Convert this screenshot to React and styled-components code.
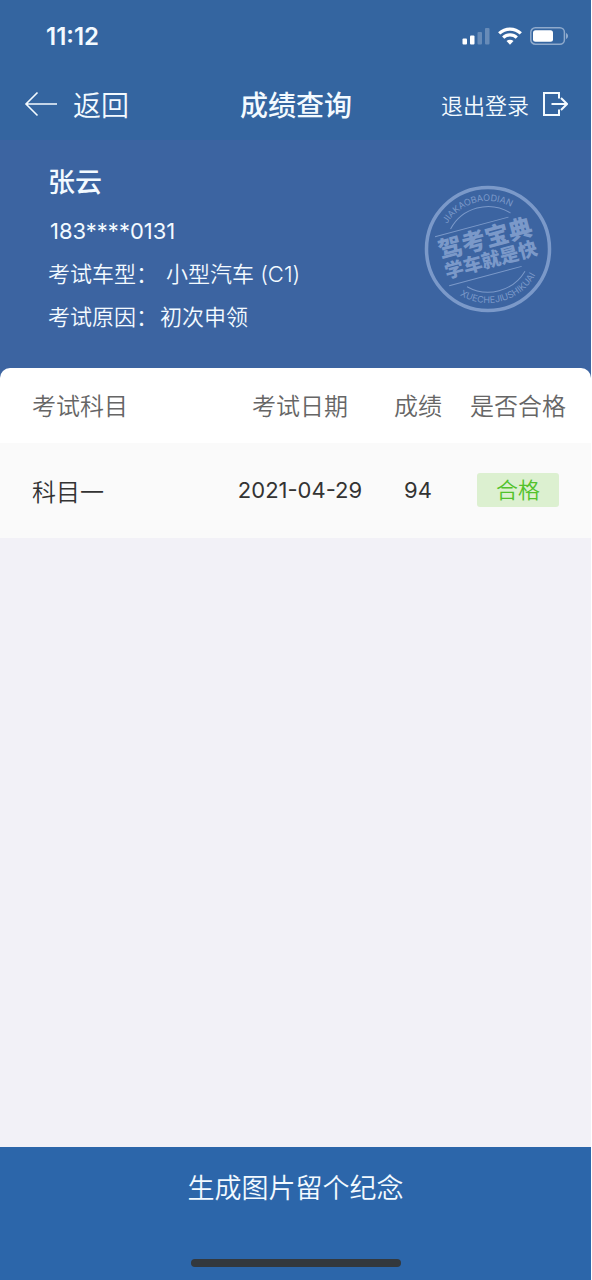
import React from 'react';
import styled, { createGlobalStyle } from 'styled-components';

const GlobalStyle = createGlobalStyle`
  * {
    box-sizing: border-box;
  }

  body {
    margin: 0;
    background: #ffffff;
    font-family: Inter, 'Noto Sans CJK SC', sans-serif;
    -webkit-font-smoothing: antialiased;
  }
`;

const Page = styled.div`
  min-height: 100vh;
  display: flex;
  flex-direction: column;
  background: #f2f1f7;
  border-right: 1px solid #ffffff;
`;

const Header = styled.header`
  background: #3465a0;
  color: #f3faff;
`;

const StatusBar = styled.div`
  display: flex;
  align-items: center;
  justify-content: space-between;
  height: 72px;
  padding: 0 22px 0 46px;
`;

const Time = styled.time`
  font-size: 24px;
  font-weight: 600;
`;

const StatusIcons = styled.div`
  display: flex;
  align-items: center;
  gap: 8px;
`;

const NavBar = styled.nav`
  display: grid;
  grid-template-columns: 1fr auto 1fr;
  align-items: center;
  height: 68px;
  padding: 0 23px 5px 24px;
`;

const NavButton = styled.button`
  display: flex;
  align-items: center;
  justify-self: ${props => props.$side};
  gap: ${props => props.$gap};
  padding: 0;
  border: none;
  background: none;
  color: inherit;
  font-family: inherit;
  font-size: ${props => props.$size};
  font-weight: 350;
  cursor: pointer;
`;

const Title = styled.h1`
  margin: 0;
  font-size: 28px;
  font-weight: 500;
`;

const Profile = styled.section`
  display: flex;
  justify-content: space-between;
  padding: 18px 39px 40px 48px;
  background: #3c64a1;
  color: #f3faff;
`;

const Name = styled.h2`
  margin: 0 0 2px;
  font-size: 27px;
  font-weight: 500;
  line-height: 50px;
`;

const InfoLine = styled.p`
  display: flex;
  gap: ${props => props.$gap || '0'};
  margin: 0;
  font-size: 22px;
  font-weight: 350;
  line-height: 43px;
`;

const Phone = styled(InfoLine)`
  padding-left: 2px;
  font-weight: 400;
`;

const StampBox = styled.div`
  padding-top: 27px;
`;

const Card = styled.main`
  flex: 1;
  margin-top: -11px;
`;

const ScoreTable = styled.table`
  width: 100%;
  table-layout: fixed;
  border-spacing: 0;
  background: #ffffff;
  border-radius: 10px 10px 0 0;
`;

const HeadCell = styled.th`
  width: ${props => props.$width || 'auto'};
  height: 75px;
  padding: 0 0 2px;
  color: #666666;
  font-size: 24px;
  font-weight: 350;
  text-align: center;

  &:first-child {
    padding-left: 32px;
    text-align: left;
  }

  &:last-child {
    padding-right: 23px;
  }
`;

const Cell = styled.td`
  height: 95px;
  padding: 0 0 1px;
  background: #fafafa;
  color: #333333;
  font-size: ${props => props.$size || '22px'};
  font-weight: ${props => props.$weight || '400'};
  text-align: center;

  &:first-child {
    padding-left: 32px;
    text-align: left;
  }

  &:last-child {
    padding-right: 23px;
  }
`;

const Badge = styled.span`
  display: inline-block;
  width: 82px;
  border-radius: 3px;
  background: #dcf0d0;
  color: #52c22b;
  font-size: 22px;
  font-weight: 350;
  line-height: 34px;
  vertical-align: middle;
`;

const Footer = styled.footer`
  display: flex;
  flex-direction: column;
  align-items: center;
  background: #2c66aa;
`;

const SaveButton = styled.button`
  width: 100%;
  height: 80px;
  padding: 0 0 2px;
  border: none;
  background: none;
  color: #f3faff;
  font-family: inherit;
  font-size: 27px;
  font-weight: 350;
  cursor: pointer;
`;

const HomeIndicator = styled.div`
  width: 210px;
  height: 8px;
  margin: 32px 0 13px;
  border-radius: 4px;
  background: #33383d;
`;

const SignalIcon = () => (
  <svg width="28" height="18" viewBox="0 0 28 18" fill="#ffffff">
    <rect x="0.5" y="11.5" width="4.5" height="6" rx="1" />
    <rect x="8" y="8.5" width="4.5" height="9" rx="1" />
    <rect x="15.5" y="5" width="4.5" height="12.5" rx="1" opacity="0.25" />
    <rect x="23" y="1" width="4.5" height="16.5" rx="1" opacity="0.25" />
  </svg>
);

const WifiIcon = () => (
  <svg width="24" height="18" viewBox="0 0 24 18" fill="none" stroke="#ffffff" strokeWidth="3.2">
    <path d="M1.2 6.4a15.6 15.6 0 0 1 21.6 0" />
    <path d="M5.2 10.6a9.8 9.8 0 0 1 13.6 0" />
    <path d="M12 17.8l-3.500-3.700a5 5 0 0 1 7 0z" fill="#ffffff" stroke="none" />
  </svg>
);

const BatteryIcon = () => (
  <svg width="39" height="18" viewBox="0 0 39 18" fill="none">
    <rect x="0.8" y="0.8" width="33.6" height="16.4" rx="4.5" stroke="#8faacc" strokeWidth="1.5" />
    <rect x="3" y="3.2" width="20" height="11.6" rx="2.5" fill="#ffffff" />
    <path d="M36 6v6c1.3-.5 2-1.7 2-3s-.7-2.5-2-3z" fill="#8faacc" />
  </svg>
);

const BackIcon = () => (
  <svg width="33" height="26" viewBox="0 0 33 26" fill="none" stroke="currentColor" strokeWidth="1.6">
    <path d="M13.5 1.5L2 13l11.5 11.5M2 13h31" />
  </svg>
);

const LogoutIcon = () => (
  <svg width="25" height="26" viewBox="0 0 25 26" fill="none" stroke="currentColor" strokeWidth="2">
    <path d="M16 7.5V2H1v22h15v-5.5" />
    <path d="M8.5 13H24M18 7l6 6-6 6" />
  </svg>
);

const Stamp = () => (
  <svg width="128" height="128" viewBox="-64 -64 128 128" fill="none" stroke="#7b99c9">
    <defs>
      <path id="stamp-top" d="M-48 0a48 48 0 0 1 96 0" />
      <path id="stamp-bottom" d="M-54 0a54 54 0 0 0 108 0" />
    </defs>
    <circle r="61.5" strokeWidth="3.5" />
    <g transform="rotate(-15)">
      <path d="M-31 -29a42.5 42.5 0 0 1 62 0M-30 31a43 43 0 0 0 60 0" />
      <path d="M-48 -25.5H28M-47 25.5H28" />
      <g fill="#7b99c9" stroke="none" textAnchor="middle">
        <text fontSize="9">
          <textPath href="#stamp-top" startOffset="50%">JIAKAOBAODIAN</textPath>
        </text>
        <text fontSize="9">
          <textPath href="#stamp-bottom" startOffset="50%">XUECHEJIUSHIKUAI</textPath>
        </text>
        <text y="-2" fontSize="24" fontWeight="900">驾考宝典</text>
        <text y="18" fontSize="19" fontWeight="900">学车就是快</text>
      </g>
    </g>
  </svg>
);

const results = [
  { subject: '科目一', date: '2021-04-29', score: 94, status: '合格' },
];

const App = () => {
  return (
    <>
      <GlobalStyle />
      <Page>
        <Header>
          <StatusBar>
            <Time>11:12</Time>
            <StatusIcons>
              <SignalIcon />
              <WifiIcon />
              <BatteryIcon />
            </StatusIcons>
          </StatusBar>
          <NavBar>
            <NavButton $side="start" $gap="16px" $size="28px">
              <BackIcon />
              返回
            </NavButton>
            <Title>成绩查询</Title>
            <NavButton $side="end" $gap="14px" $size="22px">
              退出登录
              <LogoutIcon />
            </NavButton>
          </NavBar>
        </Header>

        <Profile>
          <div>
            <Name>张云</Name>
            <Phone>183****0131</Phone>
            <InfoLine $gap="8px">
              <span>考试车型：</span>
              <span>小型汽车 (C1)</span>
            </InfoLine>
            <InfoLine $gap="2px">
              <span>考试原因：</span>
              <span>初次申领</span>
            </InfoLine>
          </div>
          <StampBox>
            <Stamp />
          </StampBox>
        </Profile>

        <Card>
          <ScoreTable>
            <thead>
              <tr>
                <HeadCell scope="col">考试科目</HeadCell>
                <HeadCell scope="col" $width="136px">考试日期</HeadCell>
                <HeadCell scope="col" $width="100px">成绩</HeadCell>
                <HeadCell scope="col" $width="123px">是否合格</HeadCell>
              </tr>
            </thead>
            <tbody>
              {results.map(item => (
                <tr key={item.subject}>
                  <Cell $size="24px" $weight="350">{item.subject}</Cell>
                  <Cell>{item.date}</Cell>
                  <Cell>{item.score}</Cell>
                  <Cell>
                    <Badge>{item.status}</Badge>
                  </Cell>
                </tr>
              ))}
            </tbody>
          </ScoreTable>
        </Card>

        <Footer>
          <SaveButton>生成图片留个纪念</SaveButton>
          <HomeIndicator />
        </Footer>
      </Page>
    </>
  );
};

export default App;
